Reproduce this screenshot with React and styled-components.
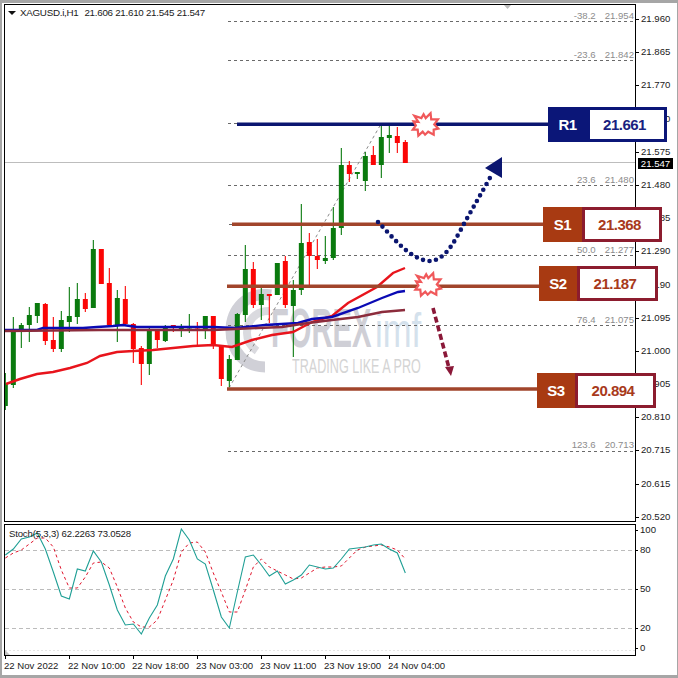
import styled, { createGlobalStyle } from "styled-components";

// [high, bodyTop, bodyBottom, low, colour], one candle every 8px, page coordinates
const CANDLES = [
  [373, 383, 406, 410, "g"], [317, 332, 385, 388, "g"], [323, 325, 329, 348, "g"], [307, 315, 325, 342, "g"],
  [303, 303, 316, 323, "g"], [303, 304, 341, 345, "r"], [317, 340, 349, 352, "r"], [311, 320, 349, 352, "g"],
  [287, 316, 322, 332, "g"], [283, 299, 317, 324, "g"], [293, 299, 309, 312, "r"], [240, 249, 308, 308, "g"],
  [249, 249, 284, 284, "r"], [268, 283, 325, 327, "r"], [290, 298, 325, 342, "g"], [286, 299, 324, 325, "r"],
  [323, 324, 349, 363, "r"], [346, 348, 364, 385, "r"], [328, 331, 364, 375, "g"], [331, 331, 340, 348, "r"],
  [325, 326, 341, 342, "g"], [325, 325, 327, 332, "r"], [324, 327, 331, 337, "g"], [314, 327, 328, 333, "g"],
  [322, 327, 328, 347, "r"], [316, 316, 330, 339, "g"], [316, 316, 345, 349, "r"], [345, 346, 379, 386, "r"],
  [355, 359, 381, 387, "g"], [313, 314, 360, 360, "g"], [245, 269, 315, 322, "g"], [262, 269, 305, 308, "r"],
  [288, 294, 305, 320, "g"], [294, 294, 296, 323, "r"], [263, 263, 295, 295, "g"], [256, 261, 305, 308, "r"],
  [280, 290, 306, 357, "g"], [204, 243, 290, 295, "g"], [233, 242, 256, 285, "r"], [239, 256, 260, 269, "r"],
  [236, 258, 261, 264, "g"], [207, 228, 258, 260, "g"], [148, 165, 228, 235, "g"], [161, 165, 174, 182, "r"],
  [172, 172, 174, 179, "g"], [152, 156, 181, 191, "g"], [146, 155, 165, 165, "r"], [123, 137, 165, 178, "g"],
  [123, 135, 138, 153, "g"], [127, 136, 143, 153, "r"], [140, 142, 163, 163, "r"],
];

const EMA_RED = "6,384 20,379 37,374 53,372 70,368 87,363 100,356 117,352 133,351 153,350 173,348 193,346 213,345 232,347 252,340 272,335 293,332 312,322 332,316 348,303 377,287 393,273 405,268";
const EMA_BLUE = "5,330 37,330 43,328 83,328 97,327 113,326 123,325 137,327 213,327 235,328 265,325 298,323 312,319 332,317 358,308 382,298 398,292 405,291";
const EMA_BROWN = "5,331 100,330 213,330 235,329 258,328 282,327 308,323 332,320 358,317 382,312 405,310";

const STOCH_MAIN = [555, 549, 539, 537, 533, 549, 572, 596, 599, 569, 571, 551, 562, 585, 610, 625, 624, 634, 618, 605, 576, 559, 529, 540, 559, 564, 590, 617, 628, 592, 557, 555, 565, 576, 571, 584, 580, 575, 565, 567, 569, 568, 559, 549, 548, 547, 545, 544, 549, 553, 573];
const STOCH_SIGNAL = [558, 553, 550, 544, 538, 538, 547, 570, 588, 588, 577, 563, 562, 568, 587, 608, 622, 627, 627, 620, 600, 580, 552, 543, 542, 552, 573, 592, 612, 612, 590, 567, 559, 567, 571, 575, 579, 578, 573, 568, 567, 567, 566, 558, 550, 547, 546, 545, 547, 550, 559];

const FIB_LINES = [21, 60, 185, 255, 325, 451];
const FIB_LABELS = [
  { top: 5, pct: "-38.2", price: "21.954" },
  { top: 44, pct: "-23.6", price: "21.842" },
  { top: 169, pct: "23.6", price: "21.480" },
  { top: 239, pct: "50.0", price: "21.277" },
  { top: 309, pct: "76.4", price: "21.075" },
  { top: 434, pct: "123.6", price: "20.713" },
];

const PRICES = ["21.960", "21.865", "21.770", "21.670", "21.575", "21.480", "21.385", "21.290", "21.190", "21.095", "21.000", "20.905", "20.810", "20.715", "20.615", "20.520"];
const STOCH_SCALE = ["100", "80", "50", "20", "0"];
const TIMES = ["22 Nov 2022", "22 Nov 10:00", "22 Nov 18:00", "23 Nov 03:00", "23 Nov 11:00", "23 Nov 19:00", "24 Nov 04:00"];

const LEVELS = [
  { name: "R1", value: "21.661", left: 544, top: 103, split: 39, tone: "blue" },
  { name: "S1", value: "21.368", left: 539, top: 203, split: 39, tone: "brown" },
  { name: "S2", value: "21.187", left: 535, top: 262, split: 38, tone: "brown" },
  { name: "S3", value: "20.894", left: 533, top: 369, split: 38, tone: "brown" },
];

const LEVEL_LINES = [
  { y: 124.3, from: 237, to: 548, color: "#0b1670" },
  { y: 224.3, from: 232, to: 543, color: "#a1452b" },
  { y: 286.3, from: 227, to: 539, color: "#a1452b" },
  { y: 389, from: 227, to: 537, color: "#a1452b" },
];

const STAR = "-12.3,-9.3 -4.7,-6.7 -2.3,-11 0,-6.7 5.3,-12 6,-5.3 13.3,-5.3 9.3,0 13.7,4.7 8.7,5.7 8.7,11.3 2.7,8 -0.7,11.3 -3.3,8 -8,12.3 -8.7,5.7 -14,5.7 -10.7,1.3 -13.3,-3.3 -8,-2.7";

const candleX = (i) => 5.33 + i * 8;
const toPoints = (values) => values.map((y, i) => `${candleX(i)},${y}`).join(" ");

const App = () => {
  return (
    <>
      <GlobalStyle />
      <SFrame>
        <SMainRow>
          <SMainPane>
            <SWatermark>
              <svg width="60" height="84" viewBox="0 0 60 84">
                <path d="M46 6 C22 2 6 20 6 42 C6 62 20 78 40 78" fill="none" stroke="#d0d0d7" strokeWidth="11" />
                <path d="M44 22 C30 22 22 32 22 44 C22 52 26 58 32 62" fill="none" stroke="#dadadf" strokeWidth="8" />
              </svg>
              <SBrand>
                <SForex>FOREX</SForex>
                <SImf>imf</SImf>
              </SBrand>
              <SSlogan>TRADING LIKE A PRO</SSlogan>
            </SWatermark>
            <SChart viewBox="5 5 630 516">
              {FIB_LINES.map((y) => (
                <line key={y} x1="228" x2="635" y1={y + 0.5} y2={y + 0.5} stroke="#6a6a6a" strokeDasharray="3 3" />
              ))}
              <line x1="228" x2="237" y1="123.5" y2="123.5" stroke="#6a6a6a" strokeDasharray="3 3" />
              <line x1="229" x2="232" y1="224.5" y2="224.5" stroke="#6a6a6a" />
              <line x1="5" x2="635" y1="162.5" y2="162.5" stroke="#bdbdbd" />
              <line x1="229" y1="388" x2="381" y2="124" stroke="#8a8a8a" strokeDasharray="3 3" />
              <polygon points="503,4 512,4 507.5,9" fill="#bdbdbd" />

              {CANDLES.map(([high, top, bottom, low, tone], i) => {
                const color = tone === "g" ? "#0a7a0e" : "#fb0505";
                const x = candleX(i);
                return (
                  <g key={i}>
                    <line x1={x} x2={x} y1={high} y2={low} stroke={color} strokeWidth="1.1" />
                    <rect x={x - 2.5} y={top} width="5" height={Math.max(bottom - top, 1.5)} fill={color} />
                  </g>
                );
              })}

              <polyline points={EMA_RED} fill="none" stroke="#e8141c" strokeWidth="2.4" />
              <polyline points={EMA_BLUE} fill="none" stroke="#0a0ab4" strokeWidth="2.4" />
              <polyline points={EMA_BROWN} fill="none" stroke="#8c2c3c" strokeWidth="2.4" />

              {LEVEL_LINES.map((line) => (
                <line key={line.y} x1={line.from} x2={line.to} y1={line.y} y2={line.y} stroke={line.color} strokeWidth="3.4" />
              ))}

              <path
                d="M378 222 C392 236 408 258 428 261 C446 262 456 238 465 222 C474 206 482 192 491 176"
                fill="none"
                stroke="#0b1670"
                strokeWidth="4.6"
                strokeLinecap="round"
                strokeDasharray="0 6.6"
              />
              <polygon points="502,157 485,168 502,178" fill="#0b1670" />

              <line x1="433" y1="308" x2="449" y2="368" stroke="#8a1838" strokeWidth="3.6" strokeDasharray="6 3" />
              <polygon points="445,367 454,366 451,376" fill="#8a1838" />

              <g transform="translate(425.7 124.3) scale(0.92)">
                <polygon points={STAR} fill="#fff" stroke="#f0585a" strokeWidth="2.4" />
              </g>
              <g transform="translate(428.3 284.3) scale(0.92)">
                <polygon points={STAR} fill="#fff" stroke="#f0585a" strokeWidth="2.4" />
              </g>
            </SChart>

            <SLegend>
              <SLegendArrow />
              <span>XAGUSD.i,H1</span>
              <span>21.606 21.610 21.545 21.547</span>
            </SLegend>

            {FIB_LABELS.map((label) => (
              <SFibLabel key={label.price} $top={label.top}>
                <span>{label.pct}</span>
                <span>{label.price}</span>
              </SFibLabel>
            ))}
          </SMainPane>

          <SPriceAxis>
            {PRICES.map((price) => (
              <SPriceTick key={price}>{price}</SPriceTick>
            ))}
          </SPriceAxis>
          <SLastPrice>21.547</SLastPrice>

          {LEVELS.map((level) => (
            <SLevelTag key={level.name} $left={level.left} $top={level.top}>
              <SLevelName $tone={level.tone} $width={level.split}>{level.name}</SLevelName>
              <SLevelValue $tone={level.tone}>{level.value}</SLevelValue>
            </SLevelTag>
          ))}
        </SMainRow>

        <SStochRow>
          <SStochPane>
            <SStochLabel>Stoch(5,3,3) 62.2263 73.0528</SStochLabel>
            <SChart viewBox="5 525 630 130">
              {[550.5, 589.5, 628.5].map((y) => (
                <line key={y} x1="5" x2="635" y1={y} y2={y} stroke="#bcbcbc" strokeDasharray="4 3" />
              ))}
              <line x1="5" x2="635" y1="650.5" y2="650.5" stroke="#e6e6e6" strokeDasharray="2 2" />
              <polygon points="5,650 5,655 10,655" fill="#c4c4c4" />
              <polyline points={toPoints(STOCH_SIGNAL)} fill="none" stroke="#e0142c" strokeDasharray="3 3" />
              <polyline points={toPoints(STOCH_MAIN)} fill="none" stroke="#1f9f95" strokeWidth="1.1" />
            </SChart>
          </SStochPane>
          <SStochAxis>
            {STOCH_SCALE.map((value) => (
              <SStochTick key={value}>{value}</SStochTick>
            ))}
          </SStochAxis>
        </SStochRow>

        <STimeAxis>
          {TIMES.map((time) => (
            <STimeTick key={time}>{time}</STimeTick>
          ))}
        </STimeAxis>
      </SFrame>
    </>
  );
};

const GlobalStyle = createGlobalStyle`
  html, body {
    margin: 0;
    padding: 0;
    background: #fff;
  }
`;

const SFrame = styled.div`
  width: 678px;
  height: 678px;
  box-sizing: border-box;
  display: flex;
  flex-direction: column;
  padding: 1px 0 0 2px;
  background: #fff;
  border-style: solid;
  border-color: #a6a6a6;
  border-width: 3px 1px 3px 2px;
  font-family: "Liberation Sans", Arial, sans-serif;
  font-size: 9.6px;
  color: #1a1a1a;
  overflow: hidden;
`;

const SMainRow = styled.div`
  position: relative;
  display: flex;
  height: 518px;
  flex-shrink: 0;
`;

const SMainPane = styled.div`
  position: relative;
  width: 632px;
  height: 518px;
  box-sizing: border-box;
  border: 1px solid #000;
  overflow: hidden;
`;

const SChart = styled.svg`
  position: absolute;
  inset: 0;
  width: 100%;
  height: 100%;
`;

const SWatermark = styled.div`
  position: absolute;
  left: 220px;
  top: 284px;
  width: 200px;
  height: 90px;

  svg {
    position: absolute;
    left: 0;
    top: 0;
  }
`;

const SBrand = styled.div`
  position: absolute;
  left: 46px;
  top: 20px;
  display: flex;
  align-items: baseline;
  line-height: 38px;
`;

const SForex = styled.span`
  display: inline-block;
  width: 104px;
  font-size: 55px;
  font-weight: 700;
  color: #cfcfd6;
  transform: scaleX(0.53);
  transform-origin: left;
`;

const SImf = styled.span`
  display: inline-block;
  font-size: 48px;
  color: #d4e1ec;
  transform: scaleX(0.72);
  transform-origin: left;
`;

const SSlogan = styled.div`
  position: absolute;
  left: 67px;
  top: 67px;
  font-size: 21px;
  line-height: 20px;
  white-space: nowrap;
  color: #d4d4d4;
  transform: scaleX(0.6);
  transform-origin: left;
`;

const SLegend = styled.div`
  position: absolute;
  left: 3px;
  top: 2px;
  display: flex;
  align-items: center;
  gap: 6px;
  line-height: 12px;
  font-size: 9.8px;
  letter-spacing: -0.28px;
  white-space: nowrap;
`;

const SLegendArrow = styled.i`
  width: 0;
  height: 0;
  margin-right: -2px;
  border-left: 4px solid transparent;
  border-right: 4px solid transparent;
  border-top: 4px solid #111;
`;

const SFibLabel = styled.div`
  position: absolute;
  right: 1px;
  top: ${(props) => props.$top}px;
  display: flex;
  gap: 9px;
  line-height: 12px;
  color: #8c8c8c;
`;

const SPriceAxis = styled.div`
  display: flex;
  flex-direction: column;
  gap: 21.2px;
  padding-top: 9px;
`;

const SPriceTick = styled.div`
  position: relative;
  height: 12px;
  line-height: 12px;
  padding-left: 5px;
  white-space: nowrap;

  &::before {
    content: "";
    position: absolute;
    left: 0;
    top: 6px;
    width: 3px;
    height: 1px;
    background: #000;
  }
`;

const SLastPrice = styled.div`
  position: absolute;
  left: 634px;
  top: 154px;
  width: 35px;
  height: 11px;
  background: #000;
  color: #fff;
  line-height: 11px;
  text-align: center;
`;

const SLevelTag = styled.div`
  position: absolute;
  left: ${(props) => props.$left}px;
  top: ${(props) => props.$top}px;
  width: 119px;
  height: 35px;
  display: flex;
  font-size: 15px;
  font-weight: 700;
  letter-spacing: -0.5px;
`;

const SLevelName = styled.div`
  width: ${(props) => props.$width}px;
  display: flex;
  align-items: center;
  justify-content: center;
  color: #fff;
  background: ${(props) => (props.$tone === "blue" ? "#0b1678" : "#a83a12")};
`;

const SLevelValue = styled.div`
  flex: 1;
  display: flex;
  align-items: center;
  justify-content: center;
  padding-right: 5px;
  background: #fff;
  border: 3px solid ${(props) => (props.$tone === "blue" ? "#0b1678" : "#8c1c2e")};
  color: ${(props) => (props.$tone === "blue" ? "#1a1f80" : "#a83a1c")};
`;

const SStochRow = styled.div`
  display: flex;
  height: 132px;
  margin-top: 2px;
  flex-shrink: 0;
`;

const SStochPane = styled.div`
  position: relative;
  width: 632px;
  box-sizing: border-box;
  border: 1px solid #000;
  overflow: hidden;
`;

const SStochLabel = styled.div`
  position: absolute;
  left: 4px;
  top: 3px;
  z-index: 1;
  line-height: 12px;
  letter-spacing: -0.18px;
`;

const SStochAxis = styled.div`
  display: grid;
  grid-template-rows: 20px 39px 39px 20px 12px;
`;

const SStochTick = styled.div`
  position: relative;
  line-height: 12px;
  padding-left: 4px;

  &::before {
    content: "";
    position: absolute;
    left: 0;
    top: 6px;
    width: 2px;
    height: 1px;
    background: #000;
  }
`;

const STimeAxis = styled.div`
  display: grid;
  grid-template-columns: repeat(7, 64px);
  padding-top: 2px;
`;

const STimeTick = styled.div`
  position: relative;
  line-height: 12px;
  padding-top: 2px;
  white-space: nowrap;

  &::before {
    content: "";
    position: absolute;
    left: 1px;
    top: -2px;
    width: 1px;
    height: 3px;
    background: #000;
  }
`;

export default App;
